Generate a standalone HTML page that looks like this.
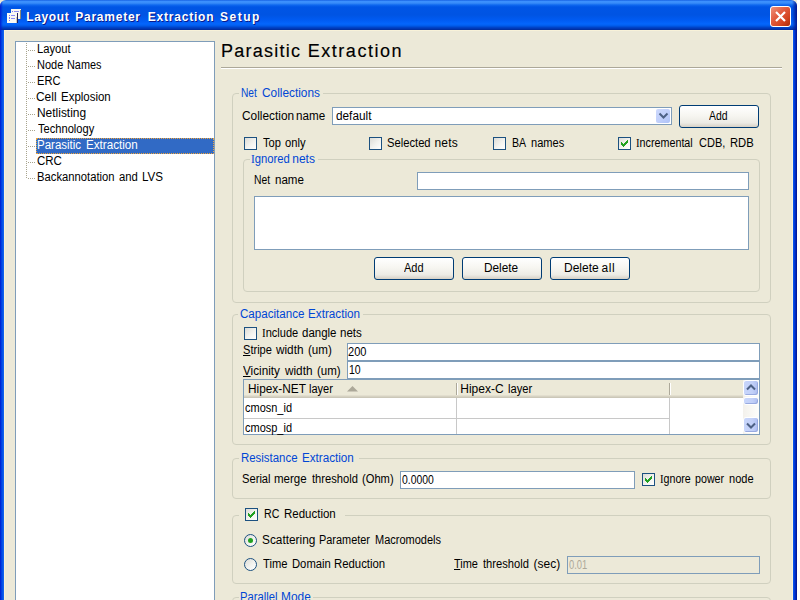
<!DOCTYPE html>
<html><head><meta charset="utf-8">
<style>
*{box-sizing:border-box;margin:0;padding:0}
html,body{width:800px;height:600px;overflow:hidden;background:#fff}
body{font-family:"Liberation Sans",sans-serif;font-size:12px;color:#000;position:relative}
.a{position:absolute}
#win{position:absolute;left:0;top:0;width:797px;height:600px;background:#ece9d8;overflow:hidden;border-radius:6px 6px 0 0}
#title{position:absolute;left:0;top:0;width:797px;height:30px;
background:linear-gradient(to bottom,#0a52d9 0px,#3d91ff 1px,#3a8df9 3px,#0f68ef 5px,#0055e5 7px,#0054e3 15px,#005bf2 20px,#0466fc 24px,#005ae8 26px,#0048cf 27px,#0034b0 29px,#002a96 30px);}
#ttext{position:absolute;left:26px;top:9px;color:#fff;font-weight:bold;font-size:13px;letter-spacing:1px;text-shadow:1px 1px 0 #0a1883;white-space:nowrap;line-height:15px}
#bl{position:absolute;left:0;top:30px;width:4px;height:570px;background:linear-gradient(to right,#0019cf 0%,#0044e4 40%,#166aee 100%)}
#br{position:absolute;left:793px;top:30px;width:4px;height:570px;background:linear-gradient(to right,#0a5cf0 0%,#0038d8 40%,#00138c 100%)}
.t{position:absolute;white-space:nowrap;line-height:14px;height:14px;transform-origin:0 0}
.gb{position:absolute;border:1px solid #d0d0bf;border-radius:4px}
.lg{position:absolute;background:#ece9d8;height:3px}
.in{position:absolute;border:1px solid #7f9db9;background:#fff}
.btn{position:absolute;width:80px;height:23px;border:1px solid #003c74;border-radius:3px;background:linear-gradient(to bottom,#fff 0%,#f7f6f1 45%,#ecebe5 80%,#d6d0c5 100%)}
.cb{position:absolute;width:13px;height:13px;border:1px solid #1c5180;background:linear-gradient(135deg,#dcdcd7 0%,#f3f3ef 55%,#fff 100%)}
.rb{position:absolute;width:13px;height:13px;border:1px solid #1c5180;border-radius:50%;background:linear-gradient(135deg,#dcdcd7 0%,#f3f3ef 55%,#fff 100%)}
.cb svg,.rb svg{position:absolute;left:0;top:0}
.hd{position:absolute;background:#ece9d8}
.si{font-family:"Liberation Serif",serif}
.sbb{position:absolute;width:16px;height:16px;border:1px solid #fff;border-radius:3px;background:linear-gradient(to right,#c8d6fb 0%,#c2d0f8 60%,#aebef0 100%);box-shadow:inset -1px -1px 0 #98aae0}
</style></head><body>
<div class="a" style="left:0;top:0;width:797px;height:10px;background:#ece9d8"></div>
<div id="win">
<div id="title"></div>
<div id="bl"></div><div id="br"></div>
<div class="a" style="left:0;top:0;width:3px;height:30px;background:linear-gradient(to right,rgba(0,25,207,.9),rgba(0,25,207,0))"></div>
<div class="a" style="left:792px;top:0;width:5px;height:30px;background:linear-gradient(to right,rgba(0,19,140,0),rgba(0,19,140,.95))"></div>
<div class="a" style="left:770px;top:6px;width:21px;height:21px;border:1px solid #fff;border-radius:3px;background:linear-gradient(135deg,#ee917b 0%,#e25d40 40%,#d4441f 72%,#a92c07 100%)"><svg class="a" style="left:0;top:0" width="19" height="19" viewBox="0 0 19 19"><path d="M5 5 L14 14 M14 5 L5 14" stroke="#fff" stroke-width="2.2" stroke-linecap="butt"/></svg></div>
<svg class="a" style="left:6px;top:8px" width="16" height="16" viewBox="0 0 16 16">
<rect x="5" y="1" width="10" height="10" fill="#fbf9f0"/><rect x="14" y="2" width="1" height="9" fill="#8a8878"/>
<rect x="6" y="3" width="1" height="1" fill="#7b7bf0"/><rect x="8" y="3" width="5" height="1" fill="#8e8ef5"/>
<rect x="1" y="5" width="10" height="10" fill="#fbfaf4"/><rect x="11" y="5" width="1" height="10" fill="#23235e"/><rect x="10" y="9" width="1" height="6" fill="#cfcbbb"/>
<rect x="3" y="7" width="1" height="1" fill="#7b7bf0"/><rect x="5" y="7" width="4" height="1" fill="#8e8ef5"/>
<rect x="3" y="9" width="1" height="2" fill="#7b7bf0"/><rect x="5" y="10" width="4" height="1" fill="#8e8ef5"/>
<rect x="3" y="12" width="1" height="1" fill="#7b7bf0"/>
</svg>

<!-- tree -->
<div class="in" style="left:15px;top:41px;width:200px;height:570px"></div>
<div class="a" style="left:36px;top:138px;width:178px;height:16px;background:#316ac5;border:1px dotted #f0a43a"></div>
<div class="a" style="left:26px;top:43px;width:1px;height:136px;background:repeating-linear-gradient(to bottom,#a8a48e 0,#a8a48e 1px,transparent 1px,transparent 2px)"></div>
<div class="a" style="left:28px;top:50px;width:7px;height:1px;background:repeating-linear-gradient(to right,#a8a48e 0,#a8a48e 1px,transparent 1px,transparent 2px)"></div>
<div class="a" style="left:28px;top:66px;width:7px;height:1px;background:repeating-linear-gradient(to right,#a8a48e 0,#a8a48e 1px,transparent 1px,transparent 2px)"></div>
<div class="a" style="left:28px;top:82px;width:7px;height:1px;background:repeating-linear-gradient(to right,#a8a48e 0,#a8a48e 1px,transparent 1px,transparent 2px)"></div>
<div class="a" style="left:28px;top:98px;width:7px;height:1px;background:repeating-linear-gradient(to right,#a8a48e 0,#a8a48e 1px,transparent 1px,transparent 2px)"></div>
<div class="a" style="left:28px;top:114px;width:7px;height:1px;background:repeating-linear-gradient(to right,#a8a48e 0,#a8a48e 1px,transparent 1px,transparent 2px)"></div>
<div class="a" style="left:28px;top:130px;width:7px;height:1px;background:repeating-linear-gradient(to right,#a8a48e 0,#a8a48e 1px,transparent 1px,transparent 2px)"></div>
<div class="a" style="left:28px;top:146px;width:7px;height:1px;background:repeating-linear-gradient(to right,#a8a48e 0,#a8a48e 1px,transparent 1px,transparent 2px)"></div>
<div class="a" style="left:28px;top:162px;width:7px;height:1px;background:repeating-linear-gradient(to right,#a8a48e 0,#a8a48e 1px,transparent 1px,transparent 2px)"></div>
<div class="a" style="left:28px;top:178px;width:7px;height:1px;background:repeating-linear-gradient(to right,#a8a48e 0,#a8a48e 1px,transparent 1px,transparent 2px)"></div>


<!-- heading rule -->
<div class="a" style="left:221px;top:67px;width:561px;height:1px;background:#aca899"></div>
<div class="a" style="left:221px;top:68px;width:561px;height:1px;background:#fff"></div>
<div class="a" style="left:4px;top:30px;width:1px;height:570px;background:#f8f2d9"></div>
<div class="a" style="left:792px;top:30px;width:1px;height:570px;background:#f8f2d9"></div>
<div class="a" style="left:4px;top:30px;width:789px;height:1px;background:#f8f2d9"></div>

<!-- group 1 -->
<div class="gb" style="left:232px;top:93px;width:539px;height:210px"></div>
<div class="lg" style="left:239px;top:92px;width:84px"></div>
<div class="in" style="left:332px;top:107px;width:340px;height:18px"></div>
<div class="a" style="left:656px;top:109px;width:14px;height:14px;border-radius:2px;background:linear-gradient(135deg,#cdd9fc 0%,#c1d0fb 50%,#aec2f7 100%)"><svg class="a" style="left:0;top:0" width="14" height="14" viewBox="0 0 14 14"><path d="M3.5 4.5 L7.5 8.5 L11.5 4.5" stroke="#4d6185" stroke-width="2" fill="none"/></svg></div>
<div class="btn" style="left:679px;top:105px"></div>
<div class="cb" style="left:244px;top:137px"></div>
<div class="cb" style="left:369px;top:137px"></div>
<div class="cb" style="left:493px;top:137px"></div>
<div class="cb" style="left:618px;top:137px"><svg width="11" height="11" viewBox="0 0 11 11" shape-rendering="crispEdges" fill="#21a121"><rect x="2" y="4" width="1" height="3"/><rect x="3" y="5" width="1" height="3"/><rect x="4" y="6" width="1" height="3"/><rect x="5" y="5" width="1" height="3"/><rect x="6" y="4" width="1" height="3"/><rect x="7" y="3" width="1" height="3"/><rect x="8" y="2" width="1" height="3"/></svg></div>
<div class="gb" style="left:243px;top:159px;width:517px;height:133px"></div>
<div class="lg" style="left:250px;top:158px;width:68px"></div>
<div class="in" style="left:417px;top:172px;width:332px;height:18px"></div>
<div class="in" style="left:254px;top:196px;width:495px;height:54px"></div>
<div class="btn" style="left:374px;top:257px"></div>
<div class="btn" style="left:462px;top:257px"></div>
<div class="btn" style="left:550px;top:257px"></div>

<!-- group 2 -->
<div class="gb" style="left:232px;top:314px;width:539px;height:131px"></div>
<div class="lg" style="left:238px;top:313px;width:125px"></div>
<div class="cb" style="left:244px;top:327px"></div>
<div class="in" style="left:347px;top:343px;width:413px;height:18px"></div>
<div class="in" style="left:347px;top:361px;width:413px;height:18px"></div>
<div class="in" style="left:243px;top:379px;width:517px;height:56px"></div>
<div class="hd" style="left:244px;top:380px;width:499px;height:18px"></div>
<div class="a" style="left:244px;top:395px;width:499px;height:1px;background:#e2dece"></div>
<div class="a" style="left:244px;top:396px;width:499px;height:1px;background:#d6d2c2"></div>
<div class="a" style="left:244px;top:397px;width:499px;height:1px;background:#cbc7b8"></div>
<div class="a" style="left:456px;top:383px;width:1px;height:12px;background:#aca899"></div>
<div class="a" style="left:457px;top:383px;width:1px;height:12px;background:#fff"></div>
<div class="a" style="left:669px;top:383px;width:1px;height:12px;background:#aca899"></div>
<div class="a" style="left:670px;top:383px;width:1px;height:12px;background:#fff"></div>
<svg class="a" style="left:347px;top:386px" width="11" height="6"><path d="M0 5.5 L5.5 0 L11 5.5 Z" fill="#aca899"/></svg>
<div class="a" style="left:456px;top:398px;width:1px;height:36px;background:#c8c8c8"></div>
<div class="a" style="left:669px;top:398px;width:1px;height:36px;background:#c8c8c8"></div>
<div class="a" style="left:244px;top:418px;width:426px;height:1px;background:#c8c8c8"></div>
<!-- scrollbar -->
<div class="a" style="left:743px;top:380px;width:16px;height:54px;background:linear-gradient(to right,#f3f1ec,#fefefb)"></div>
<div class="sbb" style="left:743px;top:380px"><svg width="14" height="14" viewBox="0 0 14 14"><path d="M3 8.5 L7 4.5 L11 8.5" stroke="#4d6185" stroke-width="2" fill="none"/></svg></div>
<div class="sbb" style="left:743px;top:397px;height:8px"></div>
<div class="sbb" style="left:743px;top:417px"><svg width="14" height="14" viewBox="0 0 14 14"><path d="M3 5.5 L7 9.5 L11 5.5" stroke="#4d6185" stroke-width="2" fill="none"/></svg></div>

<!-- group 3 -->
<div class="gb" style="left:232px;top:458px;width:539px;height:41px"></div>
<div class="lg" style="left:239px;top:457px;width:120px"></div>
<div class="in" style="left:400px;top:471px;width:235px;height:18px"></div>
<div class="cb" style="left:642px;top:473px"><svg width="11" height="11" viewBox="0 0 11 11" shape-rendering="crispEdges" fill="#21a121"><rect x="2" y="4" width="1" height="3"/><rect x="3" y="5" width="1" height="3"/><rect x="4" y="6" width="1" height="3"/><rect x="5" y="5" width="1" height="3"/><rect x="6" y="4" width="1" height="3"/><rect x="7" y="3" width="1" height="3"/><rect x="8" y="2" width="1" height="3"/></svg></div>

<!-- group 4 -->
<div class="gb" style="left:232px;top:515px;width:539px;height:69px"></div>
<div class="lg" style="left:239px;top:514px;width:106px"></div>
<div class="cb" style="left:245px;top:508px"><svg width="11" height="11" viewBox="0 0 11 11" shape-rendering="crispEdges" fill="#21a121"><rect x="2" y="4" width="1" height="3"/><rect x="3" y="5" width="1" height="3"/><rect x="4" y="6" width="1" height="3"/><rect x="5" y="5" width="1" height="3"/><rect x="6" y="4" width="1" height="3"/><rect x="7" y="3" width="1" height="3"/><rect x="8" y="2" width="1" height="3"/></svg></div>
<div class="rb" style="left:244px;top:534px"><svg width="11" height="11" viewBox="0 0 11 11"><circle cx="5.5" cy="5.5" r="2.5" fill="#21a121"/></svg></div>
<div class="rb" style="left:244px;top:558px"></div>
<div class="in" style="left:567px;top:556px;width:193px;height:18px;background:#ece9d8"></div>

<!-- group 5 -->
<div class="gb" style="left:232px;top:597px;width:539px;height:50px"></div>
<div class="lg" style="left:239px;top:596px;width:74px"></div>

<div class="t" style="left:36.81px;top:42px;transform:scaleX(0.9357);font-size:12px;">Layout</div>
<div class="t" style="left:36.59px;top:58px;transform:scaleX(0.9148);font-size:12px;">Node</div>
<div class="t" style="left:66.89px;top:58px;transform:scaleX(0.9054);font-size:12px;">Names</div>
<div class="t" style="left:36.82px;top:74px;transform:scaleX(0.9271);font-size:12px;">ERC</div>
<div class="t" style="left:36.31px;top:90px;transform:scaleX(0.9947);font-size:12px;">Cell</div>
<div class="t" style="left:60.54px;top:90px;transform:scaleX(0.9560);font-size:12px;">Explosion</div>
<div class="t" style="left:36.76px;top:106px;transform:scaleX(0.9948);font-size:12px;">Netlisting</div>
<div class="t" style="left:37.50px;top:122px;transform:scaleX(0.9262);font-size:12px;">Technology</div>
<div class="t" style="left:36.94px;top:138px;transform:scaleX(0.9578);font-size:12px;color:#fff">Parasitic</div>
<div class="t" style="left:85.83px;top:138px;transform:scaleX(0.9712);font-size:12px;color:#fff">Extraction</div>
<div class="t" style="left:36.54px;top:154px;transform:scaleX(0.9583);font-size:12px;">CRC</div>
<div class="t" style="left:36.96px;top:170px;transform:scaleX(0.9370);font-size:12px;">Backannotation</div>
<div class="t" style="left:119.46px;top:170px;transform:scaleX(0.9444);font-size:12px;">and</div>
<div class="t" style="left:141.93px;top:170px;transform:scaleX(0.9700);font-size:12px;">LVS</div>
<div class="t" style="left:240.90px;top:86px;transform:scaleX(0.8472);font-size:12px;color:#0046d5">Net</div>
<div class="t" style="left:262.01px;top:86px;transform:scaleX(0.9868);font-size:12px;color:#0046d5">Collections</div>
<div class="t" style="left:241.61px;top:109px;transform:scaleX(0.9882);font-size:12px;">Collection</div>
<div class="t" style="left:296.03px;top:109px;transform:scaleX(0.9714);font-size:12px;">name</div>
<div class="t" style="left:336.02px;top:109px;transform:scaleX(0.9829);font-size:12px;">default</div>
<div class="t" style="left:263.40px;top:136px;transform:scaleX(0.9263);font-size:12px;">Top</div>
<div class="t" style="left:285.07px;top:136px;transform:scaleX(0.9333);font-size:12px;">only</div>
<div class="t" style="left:387.07px;top:136px;transform:scaleX(0.9333);font-size:12px;">Selected</div>
<div class="t" style="left:434.50px;top:136px;letter-spacing:0.167px;font-size:12px;">nets</div>
<div class="t" style="left:511.62px;top:136px;transform:scaleX(0.8833);font-size:12px;">BA</div>
<div class="t" style="left:531.08px;top:136px;transform:scaleX(0.9214);font-size:12px;">names</div>
<div class="t" style="left:636.10px;top:136px;transform:scaleX(0.8952);font-size:12px;"><span class=si>I</span>ncremental</div>
<div class="t" style="left:698.58px;top:136px;transform:scaleX(0.9167);font-size:12px;">CDB,</div>
<div class="t" style="left:729.56px;top:136px;transform:scaleX(0.9375);font-size:12px;">RDB</div>
<div class="t" style="left:709.25px;top:109px;transform:scaleX(0.8690);font-size:12px;">Add</div>
<div class="t" style="left:251.06px;top:152px;transform:scaleX(0.9375);font-size:12px;color:#0046d5"><span class=si>I</span>gnored</div>
<div class="t" style="left:292.25px;top:152px;letter-spacing:0.000px;font-size:12px;color:#0046d5">nets</div>
<div class="t" style="left:253.64px;top:173px;transform:scaleX(0.8611);font-size:12px;">Net</div>
<div class="t" style="left:274.54px;top:173px;transform:scaleX(0.9643);font-size:12px;">name</div>
<div class="t" style="left:403.75px;top:261px;transform:scaleX(0.9167);font-size:12px;">Add</div>
<div class="t" style="left:484.02px;top:261px;transform:scaleX(0.9848);font-size:12px;">Delete</div>
<div class="t" style="left:564.00px;top:261px;letter-spacing:0.000px;font-size:12px;">Delete</div>
<div class="t" style="left:601.50px;top:261px;letter-spacing:0.625px;font-size:12px;">all</div>
<div class="t" style="left:239.53px;top:307px;transform:scaleX(0.9654);font-size:12px;color:#0046d5">Capacitance</div>
<div class="t" style="left:307.77px;top:307px;transform:scaleX(0.9760);font-size:12px;color:#0046d5">Extraction</div>
<div class="t" style="left:262.08px;top:326px;transform:scaleX(0.9211);font-size:12px;"><span class=si>I</span>nclude</div>
<div class="t" style="left:302.04px;top:326px;transform:scaleX(0.9559);font-size:12px;">dangle</div>
<div class="t" style="left:339.54px;top:326px;transform:scaleX(0.9643);font-size:12px;">nets</div>
<div class="t" style="left:243.00px;top:343px;transform:scaleX(0.9226);font-size:12px;"><u>S</u>tripe</div>
<div class="t" style="left:276.30px;top:343px;transform:scaleX(0.9815);font-size:12px;">width</div>
<div class="t" style="left:307.53px;top:343px;transform:scaleX(0.9652);font-size:12px;">(um)</div>
<div class="t" style="left:347.68px;top:345px;transform:scaleX(0.9211);font-size:12px;">200</div>
<div class="t" style="left:243.30px;top:364px;transform:scaleX(0.9763);font-size:12px;"><u>V</u>icinity</div>
<div class="t" style="left:285.10px;top:364px;transform:scaleX(0.9815);font-size:12px;">width</div>
<div class="t" style="left:316.64px;top:364px;transform:scaleX(0.9609);font-size:12px;">(um)</div>
<div class="t" style="left:348.52px;top:363px;transform:scaleX(0.8750);font-size:12px;">10</div>
<div class="t" style="left:247.76px;top:382px;transform:scaleX(0.9868);font-size:12px;">Hipex-NET</div>
<div class="t" style="left:308.58px;top:382px;transform:scaleX(0.9200);font-size:12px;">layer</div>
<div class="t" style="left:460.25px;top:382px;letter-spacing:0.000px;font-size:12px;">Hipex-C</div>
<div class="t" style="left:507.82px;top:382px;transform:scaleX(0.9300);font-size:12px;">layer</div>
<div class="t" style="left:244.59px;top:401px;transform:scaleX(0.9150);font-size:12px;">cmosn_id</div>
<div class="t" style="left:244.59px;top:421px;transform:scaleX(0.9150);font-size:12px;">cmosp_id</div>
<div class="t" style="left:240.80px;top:451px;transform:scaleX(0.9526);font-size:12px;color:#0046d5">Resistance</div>
<div class="t" style="left:301.53px;top:451px;transform:scaleX(0.9712);font-size:12px;color:#0046d5">Extraction</div>
<div class="t" style="left:241.57px;top:472px;transform:scaleX(0.9310);font-size:12px;">Serial</div>
<div class="t" style="left:274.04px;top:472px;transform:scaleX(0.9609);font-size:12px;">merge</div>
<div class="t" style="left:311.50px;top:472px;transform:scaleX(0.9286);font-size:12px;">threshold</div>
<div class="t" style="left:362.07px;top:472px;transform:scaleX(0.9297);font-size:12px;">(Ohm)</div>
<div class="t" style="left:401.70px;top:473px;transform:scaleX(0.8667);font-size:12px;">0.0000</div>
<div class="t" style="left:660.36px;top:472px;transform:scaleX(0.8864);font-size:12px;"><span class=si>I</span>gnore</div>
<div class="t" style="left:694.86px;top:472px;transform:scaleX(0.8906);font-size:12px;">power</div>
<div class="t" style="left:729.08px;top:472px;transform:scaleX(0.9200);font-size:12px;">node</div>
<div class="t" style="left:264.41px;top:507px;transform:scaleX(0.8875);font-size:12px;">RC</div>
<div class="t" style="left:283.54px;top:507px;transform:scaleX(0.9567);font-size:12px;">Reduction</div>
<div class="t" style="left:262.01px;top:533px;transform:scaleX(0.9865);font-size:12px;">Scattering</div>
<div class="t" style="left:319.09px;top:533px;transform:scaleX(0.9091);font-size:12px;">Parameter</div>
<div class="t" style="left:374.78px;top:533px;transform:scaleX(0.9169);font-size:12px;">Macromodels</div>
<div class="t" style="left:263.25px;top:557px;transform:scaleX(0.9327);font-size:12px;">Time</div>
<div class="t" style="left:291.56px;top:557px;transform:scaleX(0.9375);font-size:12px;">Domain</div>
<div class="t" style="left:334.05px;top:557px;transform:scaleX(0.9471);font-size:12px;">Reduction</div>
<div class="t" style="left:454.25px;top:557px;transform:scaleX(0.9135);font-size:12px;"><u>T</u>ime</div>
<div class="t" style="left:483.25px;top:557px;transform:scaleX(0.9286);font-size:12px;">threshold</div>
<div class="t" style="left:533.50px;top:557px;letter-spacing:0.000px;font-size:12px;">(sec)</div>
<div class="t" style="left:568.75px;top:558px;transform:scaleX(0.7826);font-size:12px;color:#aca899">0.01</div>
<div class="t" style="left:240.32px;top:590px;transform:scaleX(0.9342);font-size:12px;color:#0046d5">Parallel</div>
<div class="t" style="left:280.76px;top:590px;transform:scaleX(0.9911);font-size:12px;color:#0046d5">Mode</div>
<div class="t" style="left:26.20px;top:10px;letter-spacing:0.640px;font-size:12px;color:#fff;font-weight:bold;text-shadow:1px 1px 0 #0a1a8a">Layout</div>
<div class="t" style="left:75.25px;top:10px;letter-spacing:0.756px;font-size:12px;color:#fff;font-weight:bold;text-shadow:1px 1px 0 #0a1a8a">Parameter</div>
<div class="t" style="left:147.75px;top:10px;letter-spacing:0.783px;font-size:12px;color:#fff;font-weight:bold;text-shadow:1px 1px 0 #0a1a8a">Extraction</div>
<div class="t" style="left:220.00px;top:10px;letter-spacing:1.500px;font-size:12px;color:#fff;font-weight:bold;text-shadow:1px 1px 0 #0a1a8a">Setup</div>
<div class="t" style="left:221.00px;top:41px;letter-spacing:1.250px;font-size:18px;line-height:20px;height:20px;-webkit-text-stroke:0.15px #000">Parasitic</div>
<div class="t" style="left:307.75px;top:41px;letter-spacing:1.528px;font-size:18px;line-height:20px;height:20px;-webkit-text-stroke:0.15px #000">Extraction</div>
</div>
</body></html>
